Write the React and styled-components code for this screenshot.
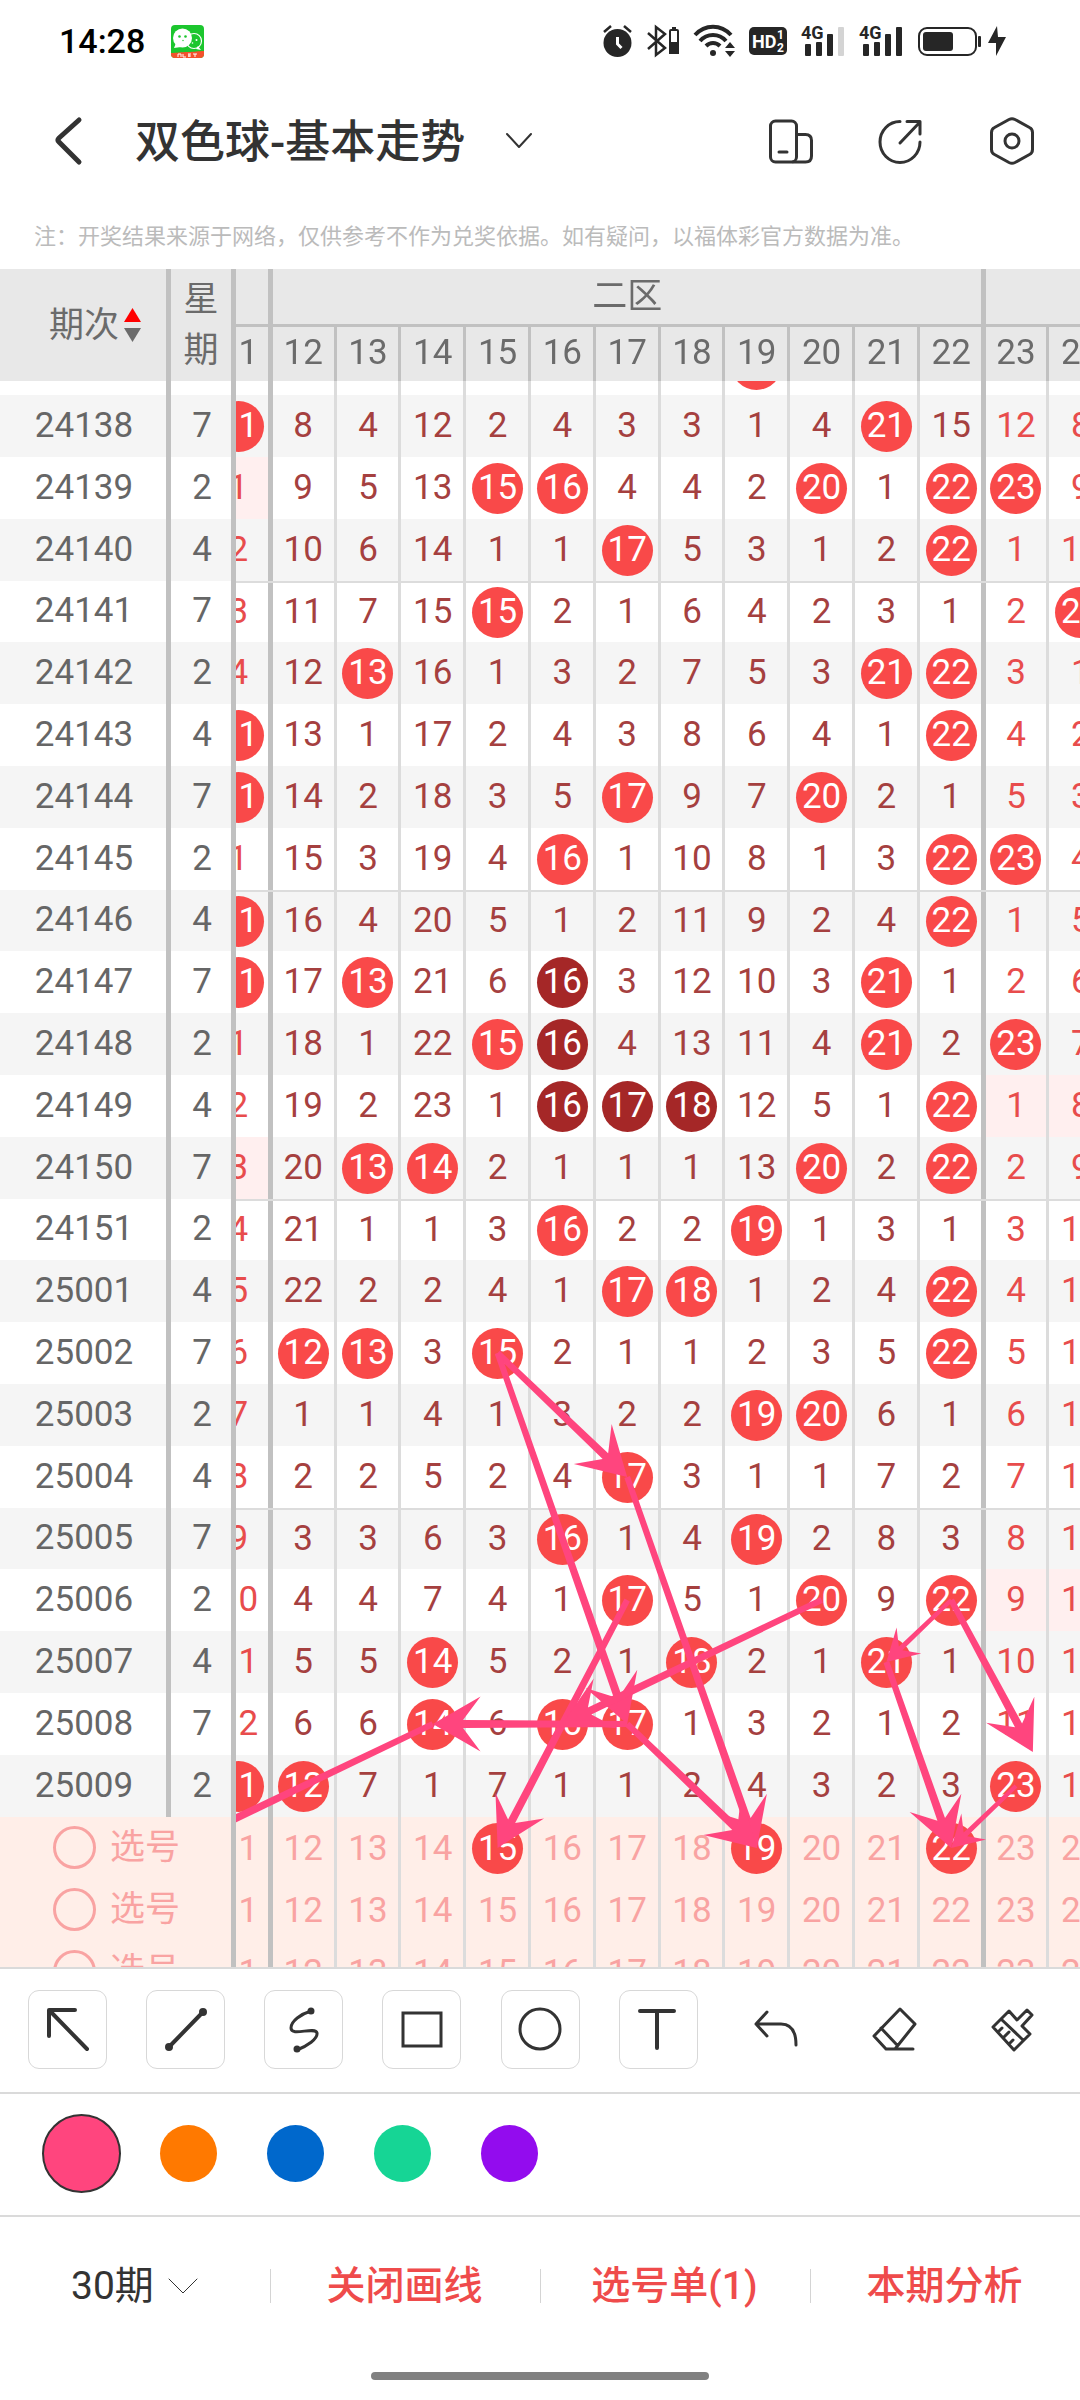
import React, { useLayoutEffect, useRef, useState } from 'react';
import styled, { createGlobalStyle, css } from 'styled-components';

const GlobalStyle = createGlobalStyle`
	* {
		box-sizing: border-box;
	}

	body {
		margin: 0;
		background: #fff;
		color: #333;
		font-family: Roboto, 'Noto Sans CJK SC', sans-serif;
	}

	button, select, input {
		font: inherit;
		color: inherit;
		margin: 0;
		padding: 0;
		border: 0;
		background: none;
	}

	svg {
		display: block;
		overflow: visible;
	}
`;

const FIXED_WIDTH = 236;
const COL = 65;
const ROW = 62;
const HEAD = 112;
const PINK = '#ff457e';

const NUMBERS = [11, 12, 13, 14, 15, 16, 17, 18, 19, 20, 21, 22, 23, 24];
const WEEKDAYS = [7, 2, 4];
const START_MISS = { 11: 4, 12: 6, 13: 2, 14: 10, 15: 0, 16: 2, 17: 1, 18: 1, 19: 5, 20: 2, 21: 4, 22: 13, 23: 10, 24: 6 };

const DRAWS = [
	{ id: '24137', hits: [19] },
	{ id: '24138', hits: [11, 21] },
	{ id: '24139', hits: [15, 16, 20, 22, 23], emptyZone: 1 },
	{ id: '24140', hits: [17, 22] },
	{ id: '24141', hits: [15, 24] },
	{ id: '24142', hits: [13, 21, 22] },
	{ id: '24143', hits: [11, 22] },
	{ id: '24144', hits: [11, 17, 20] },
	{ id: '24145', hits: [16, 22, 23] },
	{ id: '24146', hits: [11, 22] },
	{ id: '24147', hits: [11, 13, 16, 21], repeat: [16] },
	{ id: '24148', hits: [15, 16, 21, 23], repeat: [16] },
	{ id: '24149', hits: [16, 17, 18, 22], repeat: [16, 17, 18], emptyZone: 3 },
	{ id: '24150', hits: [13, 14, 20, 22], emptyZone: 1 },
	{ id: '24151', hits: [16, 19] },
	{ id: '25001', hits: [17, 18, 22] },
	{ id: '25002', hits: [12, 13, 15, 22] },
	{ id: '25003', hits: [19, 20] },
	{ id: '25004', hits: [17] },
	{ id: '25005', hits: [16, 19] },
	{ id: '25006', hits: [17, 20, 22], emptyZone: 3 },
	{ id: '25007', hits: [14, 18, 21] },
	{ id: '25008', hits: [14, 16, 17] },
	{ id: '25009', hits: [11, 12, 23] },
];

// [number, row] pairs, row 0 being the first draw and 24 the first pick row
const ARROWS = [
	[[15, 16], [17, 18]],
	[[15, 16], [17, 22]],
	[[17, 18], [19, 24]],
	[[17, 20], [15, 24]],
	[[20, 20], [16, 22]],
	[[17, 22], [14, 22]],
	[[17, 22], [19, 24]],
	[[14, 22], [10, 24]],
	[[22, 20], [21, 21]],
	[[22, 20], [23.26, 22.45]],
	[[21, 21], [22, 24]],
	[[23, 23], [22, 24]],
];

const zoneOf = (n) => (n < 12 ? 1 : n < 23 ? 2 : 3);
const startsGroup = (row) => row > 0 && row % 5 === 4;

function buildRows() {
	const miss = { ...START_MISS };
	return DRAWS.map((draw, row) => {
		const cells = NUMBERS.map((n) => {
			const hit = draw.hits.includes(n);
			miss[n] = hit ? 0 : miss[n] + 1;
			return { n, hit, value: hit ? n : miss[n], dark: (draw.repeat || []).includes(n) };
		});
		return { ...draw, cells, week: WEEKDAYS[(row + 2) % 3] };
	});
}

const ROWS = buildRows();

const Page = styled.div`
	display: flex;
	flex-direction: column;
	height: 100vh;
`;

const StatusBar = styled.div`
	display: flex;
	align-items: center;
	height: 82px;
	padding: 0 74px 0 59px;
	color: #000;
`;

const Clock = styled.span`
	font-size: 34px;
	font-weight: 500;
	margin-right: 26px;
`;

const StatusIcons = styled.div`
	display: flex;
	align-items: center;
	gap: 15px;
	margin-left: auto;
	color: #262626;
`;

const Charging = styled.div`
	display: flex;
	align-items: center;
	gap: 7px;
`;

const TopBar = styled.header`
	display: flex;
	align-items: center;
	height: 119px;
	padding: 0 45px 2px 54px;
`;

const IconButton = styled.button`
	display: flex;
	align-items: center;
	justify-content: center;
	cursor: pointer;
`;

const Title = styled.h1`
	margin: 4px 40px 0 52px;
	font-size: 45px;
	font-weight: 500;
	line-height: 60px;
`;

const Actions = styled.div`
	display: flex;
	align-items: center;
	gap: 66px;
	margin-left: auto;
`;

const Note = styled.p`
	display: flex;
	align-items: center;
	height: 68px;
	margin: 0;
	padding: 0 34px 2px;
	color: #bbb;
	font-size: 22px;
	white-space: nowrap;
`;

const Scroller = styled.main`
	flex: 1;
	min-height: 0;
	overflow: auto;
	scrollbar-width: none;
`;

const Board = styled.div`
	position: relative;
	width: calc(${FIXED_WIDTH}px + 84vw);
`;

const Chart = styled.table`
	width: 100%;
	table-layout: fixed;
	border-collapse: separate;
	border-spacing: 0;
	font-size: 35px;
	line-height: 41px;
	text-align: center;

	th, td {
		padding: 0;
		font-weight: 400;
	}

	thead {
		position: sticky;
		top: 0;
		z-index: 4;
		color: #6b6b6b;
	}
`;

const lines = css`
	box-shadow:
		inset ${(p) => (p.$thickLeft ? '2px' : '1px')} 0 ${(p) => (p.$thickLeft ? '#c1c1c1' : p.$line)},
		inset ${(p) => (p.$thickRight ? '-3px' : '-2px')} 0 ${(p) => (p.$thickRight ? '#c1c1c1' : p.$line)};
`;

const IssueHead = styled.th`
	position: sticky;
	left: 0;
	z-index: 3;
	background: #e8e8e8;
	border-right: 5px solid #c1c1c1;
`;

const WeekHead = styled(IssueHead)`
	left: 171px;
	line-height: 51px;
`;

const SortButton = styled.button`
	display: flex;
	align-items: center;
	gap: 5px;
	margin: 0 auto;
	padding-left: 24px;
`;

const ZoneHead = styled.th`
	height: 58px;
	background: #e8e8e8;
	border-bottom: 3px solid #c1c1c1;
	${lines}
`;

const NumberHead = styled.th`
	height: 54px;
	background: #e8e8e8;
	${lines}

	&& {
		padding-bottom: 4px;
	}
`;

const Row = styled.tr`
	height: ${(p) => (p.$short ? ROW - 1 : ROW)}px;
	background: ${(p) => (p.$shade ? '#f5f5f5' : '#fff')};
`;

const PickRow = styled(Row)`
	background: #ffeee8;
	color: #f9a3a2;
`;

const IssueCell = styled.th`
	position: sticky;
	left: 0;
	z-index: 3;
	background: inherit;
	color: #666;
	border-right: 5px solid #c1c1c1;

	&& {
		padding: 0 0 2px 2px;
	}
`;

const WeekCell = styled(IssueCell)`
	left: 171px;
`;

const NumberCell = styled.td`
	color: ${(p) => (p.$zone === 2 ? '#a5403f' : '#e84c4c')};
	background: ${(p) => (p.$empty ? '#ffefef' : 'transparent')};
	border-top: ${(p) => (p.$group ? '2px solid #dcdcdc' : '0')};
	${lines}

	&& {
		padding-bottom: ${(p) => (p.$hit ? 0 : 2)}px;
	}
`;

const PickCell = styled.td`
	${lines}
`;

const Ball = styled.span`
	display: block;
	width: 51px;
	height: 51px;
	margin: 0 auto;
	border-radius: 50%;
	background: ${(p) => (p.$dark ? '#a52727' : '#f94949')};
	color: #fff;
	line-height: 49px;
`;

const PickButton = styled.button`
	display: block;
	width: 51px;
	height: 51px;
	margin: 0 auto;
	border-radius: 50%;
	background: ${(p) => (p.$on ? '#f94949' : 'none')};
	color: ${(p) => (p.$on ? '#fff' : 'inherit')};
	line-height: 49px;
`;

const PickHead = styled(IssueCell)`
	color: inherit;
`;

const PickLabel = styled.label`
	display: flex;
	align-items: center;
	gap: 14px;
	padding-left: 51px;
`;

const PickRadio = styled.input`
	appearance: none;
	width: 43px;
	height: 43px;
	border: 3px solid #f9a3a2;
	border-radius: 50%;
`;

const ArrowLayer = styled.svg`
	position: absolute;
	top: 0;
	left: ${FIXED_WIDTH}px;
	width: calc(100% - ${FIXED_WIDTH}px);
	height: 100%;
	z-index: 2;
	pointer-events: none;
`;

const Toolbar = styled.div`
	display: flex;
	justify-content: space-between;
	padding: 21px 28px 23px;
	border-top: 2px solid #dadada;
`;

const ToolButton = styled(IconButton)`
	width: 79px;
	height: 79px;
	padding-bottom: 1px;
	border: 1px solid ${(p) => (p.$plain ? 'transparent' : '#d8d8d8')};
	border-radius: 11px;
`;

const Palette = styled.div`
	display: flex;
	align-items: center;
	gap: 50px;
	height: 123px;
	padding: 0 53px 2px;
	border-top: 2px solid #dadada;
`;

const Swatch = styled.input`
	appearance: none;
	width: 57px;
	height: 57px;
	border-radius: 50%;
	background: ${(p) => p.$color};
	cursor: pointer;

	&:checked {
		width: 79px;
		height: 79px;
		margin: 0 -11px;
		border: 2px solid #333;
	}
`;

const BottomBar = styled.nav`
	display: grid;
	grid-template-columns: repeat(4, 1fr);
	align-items: center;
	height: 140px;
	border-top: 2px solid #dadada;
	font-size: 39px;
`;

const BottomItem = styled.div`
	display: flex;
	align-items: center;
	justify-content: center;
	height: 34px;
	padding-right: ${(p) => (p.$first ? 0 : 2)}px;
	border-left: ${(p) => (p.$first ? '0' : '1px solid #d4d4d4')};
`;

const BottomLink = styled.button`
	color: #ef4b4b;
	font-weight: 500;
	line-height: 46px;
	white-space: nowrap;
`;

const PeriodLabel = styled.label`
	display: flex;
	align-items: center;
	gap: 13px;
`;

const PeriodSelect = styled.select`
	appearance: none;
	line-height: 46px;
`;

const HomeArea = styled.div`
	display: flex;
	justify-content: center;
	padding: 17px 0 20px;
`;

const HomeBar = styled.div`
	width: 338px;
	height: 8px;
	border-radius: 4px;
	background: #808080;
`;

function Stroke({ width, height, stroke = 3, children }) {
	return (
		<svg
			width={width}
			height={height}
			viewBox={`0 0 ${width} ${height}`}
			fill="none"
			stroke="currentColor"
			strokeWidth={stroke}
			strokeLinecap="round"
			strokeLinejoin="round"
			aria-hidden="true"
		>
			{children}
		</svg>
	);
}

function AppBadge() {
	return (
		<svg width="33" height="33" viewBox="0 0 33 33" aria-hidden="true">
			<clipPath id="badge"><rect width="33" height="33" rx="4" /></clipPath>
			<g clipPath="url(#badge)">
				<rect width="33" height="33" fill="#1cc62e" />
				<circle cx="23" cy="16" r="7.5" fill="#1cc62e" stroke="#fff" strokeWidth="1.2" />
				<path d="M27 21l3 4-5-1z" fill="#fff" />
				<circle cx="11.5" cy="13" r="9.5" fill="#fff" />
				<path d="M5 18l-2 5 7-1z" fill="#fff" />
				<g fill="#1cc62e"><circle cx="8.5" cy="11.5" r="1.3" /><circle cx="14.5" cy="11.5" r="1.3" /><circle cx="12" cy="15.5" r=".7" /></g>
				<g fill="#fff"><circle cx="21.5" cy="18" r=".8" /><circle cx="25.5" cy="15" r="1" /></g>
				<path d="M0 28c6 0 9-1 17-1 7 0 10-1 16-1v7H0z" fill="#f4512c" />
				<path d="M7 29v3M7 29h3v3M12 29v3h3M17 29h3M17 31h3M18 29v3M22 29h4M24 29v3" fill="none" stroke="#fff" />
			</g>
		</svg>
	);
}

function Signal({ full }) {
	return (
		<svg width="43" height="34" viewBox="0 0 43 34" fill="currentColor" aria-hidden="true">
			<text x="-1" y="15" fontSize="18" fontWeight="700" fontFamily="Roboto">4G</text>
			<rect x="3" y="20" width="6" height="12" rx="1" />
			<rect x="14" y="18" width="6" height="14" rx="1" />
			<rect x="25" y="10" width="6" height="22" rx="1" />
			<rect x="36" y="3" width="6" height="29" rx="1" opacity={full ? 1 : 0.2} />
		</svg>
	);
}

function Status() {
	return (
		<StatusBar>
			<Clock>14:28</Clock>
			<AppBadge />
			<StatusIcons>
				<svg width="29" height="34" viewBox="0 0 29 34" aria-hidden="true">
					<circle cx="14.5" cy="19" r="14" fill="currentColor" />
					<path d="M1 8l7-6M28 8l-7-6" stroke="currentColor" strokeWidth="2.5" />
					<path d="M14.5 13v7l4 4" fill="none" stroke="#fff" strokeWidth="3" />
				</svg>
				<svg width="32" height="34" viewBox="0 0 32 34" fill="none" stroke="currentColor" strokeWidth="2.5" aria-hidden="true">
					<path d="M1 9l17 15-9 7V3l9 7L1 25" />
					<rect x="23" y="6" width="8" height="23" rx="1" strokeWidth="2" />
					<path d="M23 19h8v10h-8zM25 4h4" fill="currentColor" strokeWidth="2" />
				</svg>
				<svg width="40" height="34" viewBox="0 0 40 34" fill="none" stroke="currentColor" strokeWidth="4" aria-hidden="true">
					<path d="M1 11C11 0 27 0 37 11M6 17c7-8 19-8 26 0M12 22c4-4 10-4 14 0" />
					<circle cx="19" cy="29" r="3" fill="currentColor" stroke="none" />
					<path d="M31 24l5-6 5 6zM31 27h10l-5 6z" fill="currentColor" stroke="none" />
				</svg>
				<svg width="38" height="28" viewBox="0 0 38 28" aria-hidden="true">
					<rect width="38" height="28" rx="5" fill="currentColor" />
					<g fill="#fff" fontFamily="Roboto" fontWeight="700">
						<text x="3" y="21" fontSize="18">HD</text>
						<text x="28" y="12" fontSize="12">1</text>
						<text x="28" y="25" fontSize="12">2</text>
					</g>
				</svg>
				<Signal />
				<Signal full />
				<Charging>
					<svg width="63" height="30" viewBox="0 0 63 30" aria-hidden="true">
						<rect x="1" y="2" width="57" height="27" rx="8" fill="none" stroke="currentColor" strokeWidth="2" />
						<rect x="5" y="6" width="30" height="19" rx="3" fill="currentColor" />
						<rect x="60" y="10" width="3" height="11" rx="1" fill="currentColor" />
					</svg>
					<svg width="18" height="30" viewBox="0 0 18 30" aria-hidden="true">
						<path d="M9 0L0 17h8v13l10-19h-8z" fill="currentColor" />
					</svg>
				</Charging>
			</StatusIcons>
		</StatusBar>
	);
}

function Header() {
	return (
		<TopBar>
			<IconButton aria-label="返回">
				<Stroke width={29} height={50} stroke={5}><path d="M25 4L5 22q-2 2 0 4l20 20" /></Stroke>
			</IconButton>
			<Title>双色球-基本走势</Title>
			<IconButton aria-label="切换走势图">
				<Stroke width={28} height={18} stroke={2}><path d="M2 2l12 13L26 2" /></Stroke>
			</IconButton>
			<Actions>
				<IconButton aria-label="横屏">
					<Stroke width={44} height={46}>
						<rect x="1.5" y="3" width="26" height="41" rx="5" />
						<path d="M27.5 16.5h9q6 0 6 6v15.500q0 6-6 6H24M10 34h8" />
					</Stroke>
				</IconButton>
				<IconButton aria-label="分享">
					<Stroke width={44} height={46}>
						<path d="M21 3.500A20 20.500 0 1 0 41 24M21 25L41 4M28 3.500h13v12.500" />
					</Stroke>
				</IconButton>
				<IconButton aria-label="设置">
					<Stroke width={46} height={48}>
						<path d="M20 2.500q3-1.500 6 0l14.500 8q3 1.500 3 5v17q0 3.500-3 5l-14.500 8q-3 1.500-6 0l-14.500-8q-3-1.500-3-5v-17q0-3.500 3-5z" />
						<circle cx="23" cy="24" r="7" />
					</Stroke>
				</IconButton>
			</Actions>
		</TopBar>
	);
}

function place([n, row]) {
	const short = Math.floor(row / 5);
	return [(n - 11 + 0.5) * COL, HEAD + ROW * (row + 0.5) - short];
}

function Arrow({ from, to, color }) {
	const [x1, y1] = place(from);
	const [x2, y2] = place(to);
	const length = Math.hypot(x2 - x1, y2 - y1);
	const angle = Math.atan2(y2 - y1, x2 - x1);
	const head = Math.min(55, length * 0.4);
	const scale = head / 55;
	const at = (back, side) => {
		const x = x2 - back * Math.cos(angle) - side * Math.sin(angle);
		const y = y2 - back * Math.sin(angle) + side * Math.cos(angle);
		return `${x.toFixed(1)},${y.toFixed(1)}`;
	};
	const points = [
		at(length, -3 * scale),
		at(head * 0.55, -4 * scale),
		at(head * 0.87, -head / 2),
		at(0, 0),
		at(head * 0.87, head / 2),
		at(head * 0.55, 4 * scale),
		at(length, 3 * scale),
	];
	return <polygon points={points.join(' ')} fill={color} />;
}

function edges(n, line) {
	return { $line: line, $thickLeft: n === 12 || n === 23, $thickRight: n === 11 || n === 22 };
}

function ChartHead() {
	return (
		<thead>
			<tr>
				<IssueHead rowSpan={2}>
					<SortButton>
						期次
						<svg width="17" height="34" viewBox="0 0 17 34" aria-hidden="true">
							<path d="M8.5 0L17 14H0z" fill="#f00" />
							<path d="M0 20h17L8.5 34z" fill="#6b6b6b" />
						</svg>
					</SortButton>
				</IssueHead>
				<WeekHead rowSpan={2}>星<br />期</WeekHead>
				<ZoneHead $line="transparent" $thickRight />
				<ZoneHead colSpan={11} $line="transparent" $thickLeft $thickRight>二区</ZoneHead>
				<ZoneHead colSpan={2} $line="transparent" $thickLeft />
			</tr>
			<tr>
				{NUMBERS.map((n) => <NumberHead key={n} {...edges(n, '#c1c1c1')}>{n}</NumberHead>)}
			</tr>
		</thead>
	);
}

function Trend({ color }) {
	const scroller = useRef(null);
	const [picks, setPicks] = useState([[15, 19, 22], [], []]);
	const height = HEAD + ROW * (ROWS.length + picks.length) - 4;

	useLayoutEffect(() => {
		scroller.current.scrollTop = 48;
		scroller.current.scrollLeft = 30;
	}, []);

	const toggle = (row, n) => {
		setPicks(picks.map((list, i) => {
			if (i !== row) return list;
			return list.includes(n) ? list.filter((x) => x !== n) : [...list, n];
		}));
	};

	return (
		<Scroller ref={scroller}>
			<Board>
				<Chart>
					<colgroup>
						<col style={{ width: 171 }} />
						<col style={{ width: 65 }} />
						{NUMBERS.map((n) => <col key={n} />)}
					</colgroup>
					<ChartHead />
					<tbody>
						{ROWS.map((row, i) => (
							<Row key={row.id} $shade={i % 2 === 1} $short={startsGroup(i)}>
								<IssueCell scope="row">{row.id}</IssueCell>
								<WeekCell as="td">{row.week}</WeekCell>
								{row.cells.map((cell) => (
									<NumberCell
										key={cell.n}
										$zone={zoneOf(cell.n)}
										$empty={row.emptyZone === zoneOf(cell.n)}
										$group={startsGroup(i)}
										$hit={cell.hit}
										{...edges(cell.n, '#dcdcdc')}
									>
										{cell.hit ? <Ball $dark={cell.dark}>{cell.value}</Ball> : cell.value}
									</NumberCell>
								))}
							</Row>
						))}
						{picks.map((list, i) => (
							<PickRow key={i}>
								<PickHead colSpan={2} scope="row">
									<PickLabel>
										<PickRadio type="radio" name={`pick-${i}`} />
										选号
									</PickLabel>
								</PickHead>
								{NUMBERS.map((n) => (
									<PickCell key={n} {...edges(n, '#dcdcdc')}>
										<PickButton $on={list.includes(n)} onClick={() => toggle(i, n)}>{n}</PickButton>
									</PickCell>
								))}
							</PickRow>
						))}
					</tbody>
				</Chart>
				<ArrowLayer viewBox={`0 0 ${COL * NUMBERS.length} ${height}`} preserveAspectRatio="none">
					{ARROWS.map(([from, to], i) => <Arrow key={i} from={from} to={to} color={color} />)}
				</ArrowLayer>
			</Board>
		</Scroller>
	);
}

const TOOLS = [
	{ name: '箭头', stroke: 4, icon: <path d="M3 29V3h26M4 4l37 38" /> },
	{ name: '直线', stroke: 4, icon: <><path d="M5 40L39 5" /><circle cx="5" cy="40" r="2" fill="currentColor" /><circle cx="39" cy="5" r="2" fill="currentColor" /></> },
	{
		name: '曲线',
		icon: <><path d="M29 4C19 7 9 14 9 21c0 9 24-2 26 5 1 6-10 13-20 17" /><circle cx="29" cy="4" r="2" fill="currentColor" /><circle cx="15" cy="42" r="2" fill="currentColor" /></>,
	},
	{ name: '矩形', icon: <rect x="3" y="6" width="38" height="33" strokeLinejoin="miter" /> },
	{ name: '圆形', icon: <circle cx="22" cy="22" r="20" /> },
	{ name: '文字', stroke: 4, icon: <path d="M4 4h34M21 4v37" /> },
	{ name: '撤销', plain: true, icon: <path d="M13 5L2 17l11 12M2 17h25q15 0 15 21" /> },
	{ name: '橡皮擦', plain: true, icon: <path d="M14 42L2 29 28 2l15 15-20 25zM9 21l16 17M14 42h27" /> },
	{ name: '清空', plain: true, icon: <path d="M2 20L18 4l8 9L36 3l5 5-10 11 8 8-16 16zM10 12l21 20M7 25l4-4M12 31l6-6M18 37l4-4" /> },
];

const COLORS = [
	{ name: '粉色', value: PINK },
	{ name: '橙色', value: '#ff7900' },
	{ name: '蓝色', value: '#0068cc' },
	{ name: '绿色', value: '#16d595' },
	{ name: '紫色', value: '#930cee' },
];

export default function App() {
	const [color, setColor] = useState(PINK);

	return (
		<>
			<GlobalStyle />
			<Page>
				<Status />
				<Header />
				<Note>注：开奖结果来源于网络，仅供参考不作为兑奖依据。如有疑问，以福体彩官方数据为准。</Note>
				<Trend color={PINK} />
				<Toolbar>
					{TOOLS.map((tool) => (
						<ToolButton key={tool.name} aria-label={tool.name} $plain={tool.plain}>
							<Stroke width={44} height={44} stroke={tool.stroke}>{tool.icon}</Stroke>
						</ToolButton>
					))}
				</Toolbar>
				<Palette>
					{COLORS.map((c) => (
						<Swatch
							key={c.value}
							type="radio"
							name="color"
							aria-label={c.name}
							$color={c.value}
							checked={color === c.value}
							onChange={() => setColor(c.value)}
						/>
					))}
				</Palette>
				<BottomBar>
					<BottomItem $first>
						<PeriodLabel>
							<PeriodSelect aria-label="期数" defaultValue="30">
								<option value="30">30期</option>
								<option value="50">50期</option>
								<option value="80">80期</option>
							</PeriodSelect>
							<Stroke width={32} height={18} stroke={1}><path d="M2 2l14 14L30 2" /></Stroke>
						</PeriodLabel>
					</BottomItem>
					<BottomItem><BottomLink>关闭画线</BottomLink></BottomItem>
					<BottomItem><BottomLink>选号单(1)</BottomLink></BottomItem>
					<BottomItem><BottomLink>本期分析</BottomLink></BottomItem>
				</BottomBar>
				<HomeArea><HomeBar /></HomeArea>
			</Page>
		</>
	);
}
